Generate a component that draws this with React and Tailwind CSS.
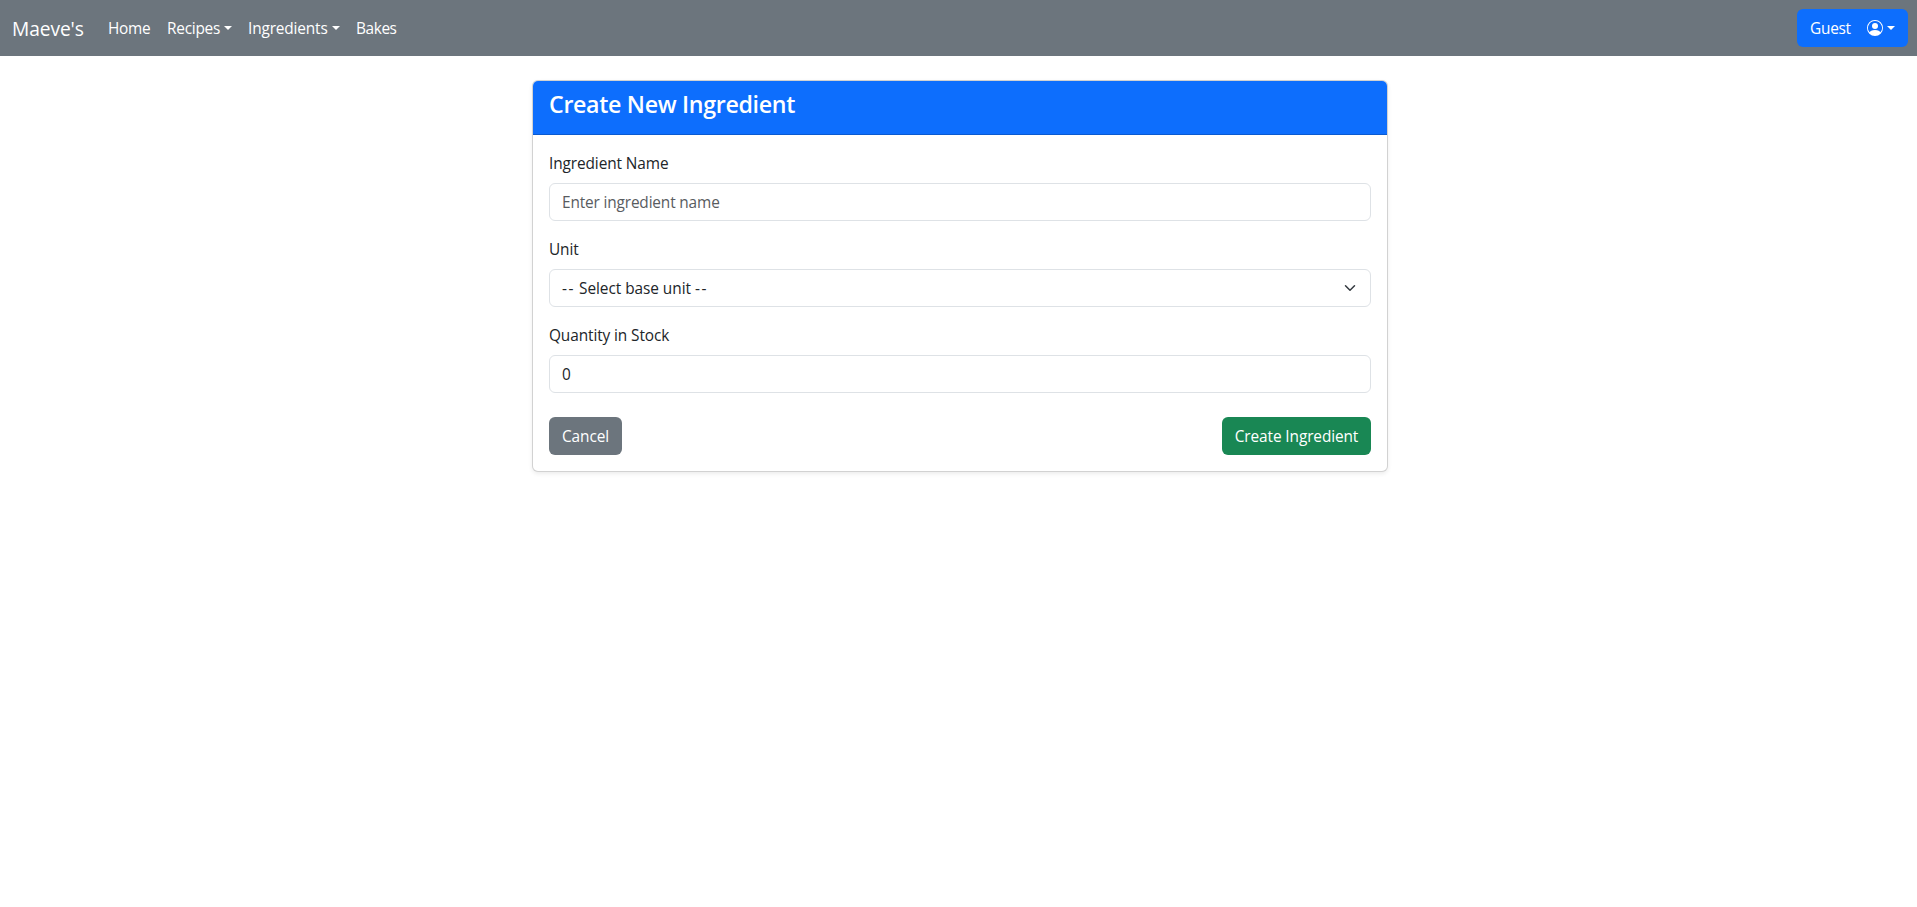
function Caret() {
  return (
    <span className="ml-auto h-0 w-0 border-x-[4.8px] border-t-[4.8px] border-x-transparent border-t-white" />
  );
}

function NavLink({ label, caret, className }) {
  return (
    <a href="#" className={`flex items-center px-2 py-2 ${className}`}>
      <span className="shrink-0 whitespace-nowrap pt-0.5">{label}</span>
      {caret && <Caret />}
    </a>
  );
}

const control =
  "block h-[38px] w-full rounded-md border border-[#dee2e6] bg-white px-3 pt-[7px] pb-[5px] leading-6 text-[#212529] outline-none placeholder:text-[#595c5f] placeholder:opacity-100";

export default function App() {
  return (
    <div className="min-h-screen bg-white font-['Open_Sans','Noto_Sans',sans-serif] text-[15.4px] leading-6 tracking-[-0.1px] text-[#212529]">
      <nav className="flex h-14 items-center bg-[#6c757d] pl-3 pr-[9px] tracking-[-0.25px] text-white">
        <a href="#" className="w-[88px] whitespace-nowrap pt-0.5 text-[19.2px] leading-[30px] tracking-[-0.1px]">
          Maeve's
        </a>
        <NavLink label="Home" className="w-[59px]" />
        <NavLink label="Recipes" caret className="w-[81px]" />
        <NavLink label="Ingredients" caret className="w-[108px] tracking-[-0.15px]" />
        <NavLink label="Bakes" className="w-[56px] tracking-[-0.4px]" />
        <button className="ml-auto flex h-[38px] w-[111px] items-center rounded-md bg-[#0d6efd] pl-[13px] pr-[13px]">
          <span className="w-[57px] pt-0.5 text-left">Guest</span>
          <svg viewBox="0 0 16 16" className="h-4 w-4 fill-white">
            <path d="M11 6a3 3 0 1 1-6 0 3 3 0 0 1 6 0" />
            <path
              fillRule="evenodd"
              d="M0 8a8 8 0 1 1 16 0A8 8 0 0 1 0 8m8-7a7 7 0 0 0-5.468 11.37C3.242 11.226 4.805 10 8 10s4.757 1.225 5.468 2.37A7 7 0 0 0 8 1"
            />
          </svg>
          <Caret />
        </button>
      </nav>

      <main className="flex justify-center pl-[3px] pt-6">
        <section className="w-[856px] rounded-md border border-black/[.175] bg-white shadow-[0_2px_4px_rgba(0,0,0,0.075)]">
          <header className="rounded-t-[5px] border-b border-black/[.175] bg-[#0d6efd] px-4 pb-2 pt-[9px] text-white">
            <h4 className="mb-[7px] text-[23.2px] font-semibold leading-[28.8px] tracking-[-0.32px]">
              Create New Ingredient
            </h4>
          </header>
          <form className="px-4 pb-4 pt-[17px]">
            <div className="mb-[17px]">
              <label className="mb-[7px] block" htmlFor="name">Ingredient Name</label>
              <input id="name" className={`${control} tracking-[-0.15px]`} placeholder="Enter ingredient name" />
            </div>
            <div className="mb-[17px]">
              <label className="mb-[7px] block" htmlFor="unit">Unit</label>
              <div id="unit" role="combobox" className={`${control} flex! justify-between`}>
                <span className="tracking-[-0.05px]">
                  <span className="tracking-[1.6px]">--</span> Select base unit{" "}
                  <span className="tracking-[1.6px]">--</span>
                </span>
                <svg viewBox="0 0 16 16" className="mt-[5px] h-3 w-4 fill-none stroke-[#343a40] stroke-2">
                  <path strokeLinecap="round" strokeLinejoin="round" d="m2 5 6 6 6-6" />
                </svg>
              </div>
            </div>
            <div className="mb-6">
              <label className="mb-[7px] block" htmlFor="stock">Quantity in Stock</label>
              <input id="stock" className={control} defaultValue="0" />
            </div>
            <div className="flex justify-between text-white">
              <button type="button" className="h-[38px] w-[73px] whitespace-nowrap rounded-md bg-[#6c757d] pt-0.5">Cancel</button>
              <button type="button" className="h-[38px] w-[149px] whitespace-nowrap rounded-md bg-[#198754] pt-0.5">
                Create Ingredient
              </button>
            </div>
          </form>
        </section>
      </main>
    </div>
  );
}
